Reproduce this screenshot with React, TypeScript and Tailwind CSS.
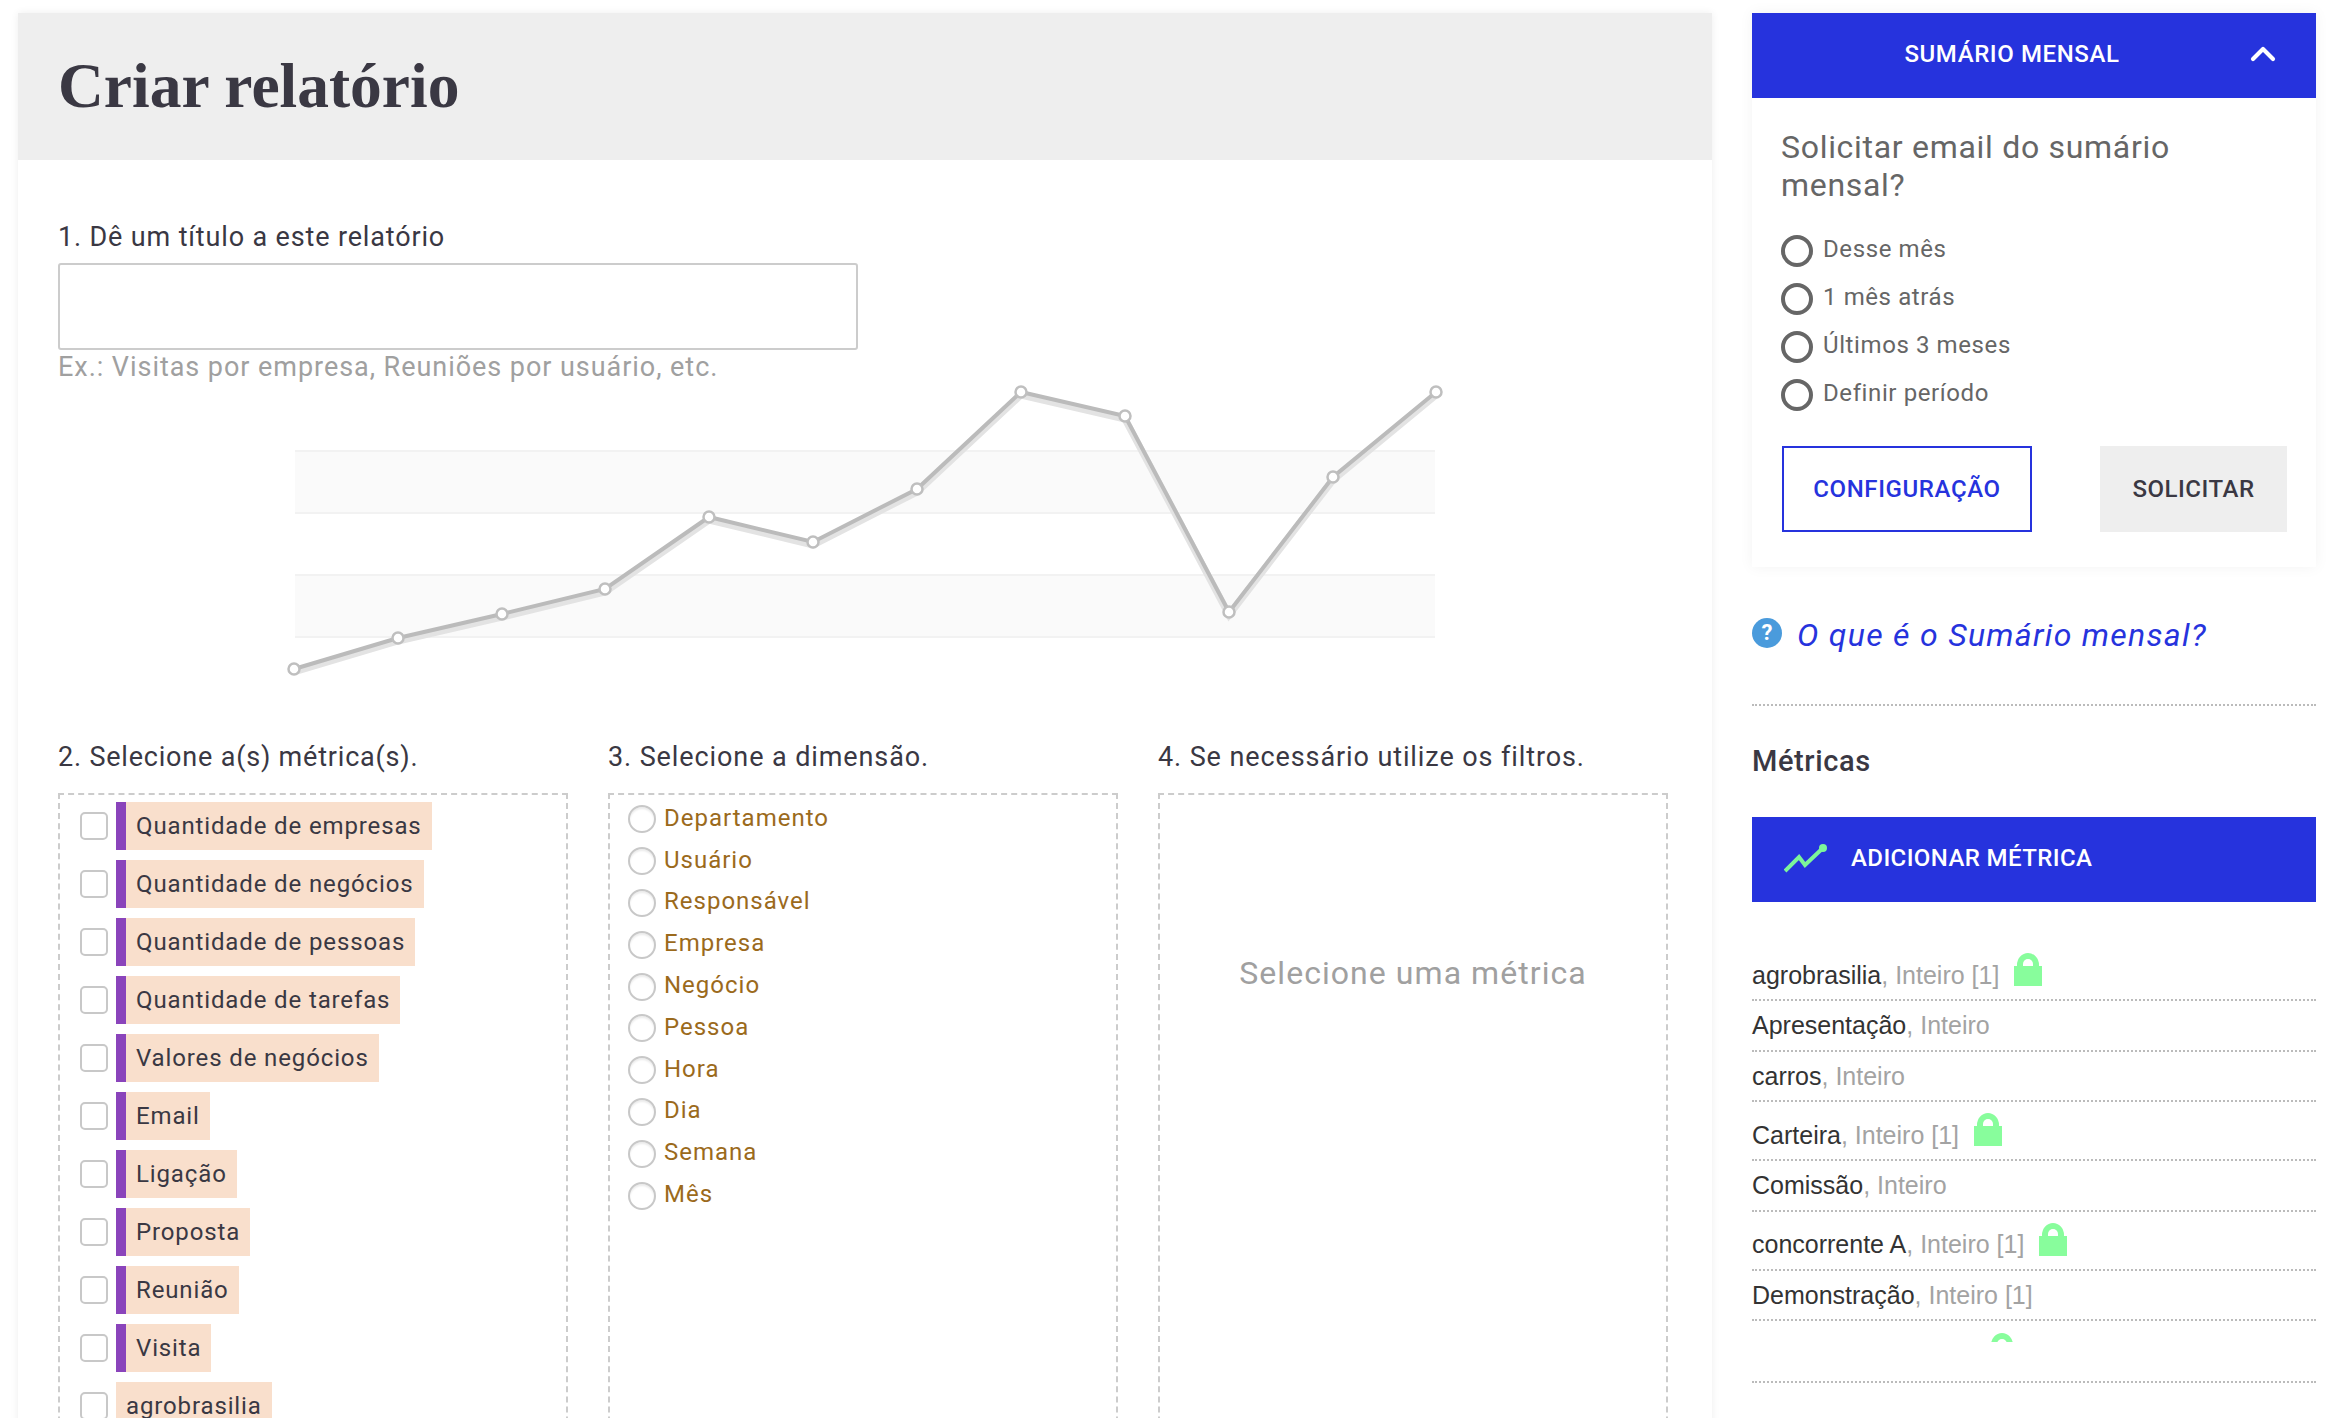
import { ChevronUp } from 'lucide-react';

const metrics = [
  { name: 'Quantidade de empresas', mark: true },
  { name: 'Quantidade de negócios', mark: true },
  { name: 'Quantidade de pessoas', mark: true },
  { name: 'Quantidade de tarefas', mark: true },
  { name: 'Valores de negócios', mark: true },
  { name: 'Email', mark: true },
  { name: 'Ligação', mark: true },
  { name: 'Proposta', mark: true },
  { name: 'Reunião', mark: true },
  { name: 'Visita', mark: true },
  { name: 'agrobrasilia', mark: false },
];

const dimensions = ['Departamento', 'Usuário', 'Responsável', 'Empresa', 'Negócio', 'Pessoa', 'Hora', 'Dia', 'Semana', 'Mês'];
const periods = ['Desse mês', '1 mês atrás', 'Últimos 3 meses', 'Definir período'];

const customMetrics = [
  { name: 'agrobrasilia', suffix: 'Inteiro [1]', lock: true },
  { name: 'Apresentação', suffix: 'Inteiro', lock: false },
  { name: 'carros', suffix: 'Inteiro', lock: false },
  { name: 'Carteira', suffix: 'Inteiro [1]', lock: true },
  { name: 'Comissão', suffix: 'Inteiro', lock: false },
  { name: 'concorrente A', suffix: 'Inteiro [1]', lock: true },
  { name: 'Demonstração', suffix: 'Inteiro [1]', lock: false },
];

const points = [
  [236, 287], [340, 256], [444, 232], [547, 207], [651, 135], [755, 160],
  [859, 107], [963, 10], [1067, 34], [1171, 230], [1275, 95], [1378, 10],
];

function Lock() {
  return (
    <svg width="28" height="33" viewBox="0 0 28 33" className="shrink-0">
      <path d="M0 13h3V12a11 12 0 0 1 22 0v1h3v20H0z" fill="#88fd9c" />
      <path d="M9 13v-2a5 5 0 0 1 10 0v2z" fill="#fff" />
    </svg>
  );
}

function Chart() {
  const line = points.map((p) => p.join(',')).join(' ');
  const shadow = points.map((p) => `${p[0]},${p[1] + 3}`).join(' ');
  return (
    <svg width="1610" height="360" viewBox="0 0 1610 360" className="block">
      <rect x="237" y="69" width="1140" height="62" fill="#fafafa" />
      <rect x="237" y="193" width="1140" height="62" fill="#fafafa" />
      {[69, 131, 193, 255].map((y) => (
        <line key={y} x1="237" x2="1377" y1={y} y2={y} stroke="#f2f2f2" strokeWidth="2" />
      ))}
      <polyline points={shadow} fill="none" stroke="#e3e3e3" strokeWidth="7" />
      <polyline points={line} fill="none" stroke="#bbbbbb" strokeWidth="4" />
      {points.map((p) => (
        <circle key={p[0]} cx={p[0]} cy={p[1]} r="5.5" fill="#fff" stroke="#bfbfbf" strokeWidth="2.5" />
      ))}
    </svg>
  );
}

export default function App() {
  return (
    <div className="flex h-[1418px] overflow-hidden bg-white pl-[18px] pt-[13px] font-['Roboto',sans-serif] text-[#3a3843]">
      <main className="flex h-[1500px] w-[1694px] shrink-0 flex-col shadow-[0_0_8px_rgba(0,0,0,0.07)]">
        <div className="flex h-[147px] items-center bg-[#eeeeee] pb-[2px] pl-[40px]">
          <h1 className="font-['Liberation_Serif',serif] text-[63.5px] font-bold">Criar relatório</h1>
        </div>
        <div className="flex flex-1 flex-col px-[40px] pt-[62px]">
          <label className="text-[27px] leading-[30px] tracking-[0.85px]">1. Dê um título a este relatório</label>
          <input className="mt-[11px] h-[87px] w-[800px] rounded-[3px] border-2 border-[#cccccc]" />
          <p className="mt-[2px] text-[27px] leading-[30px] tracking-[0.95px] text-[#a0a0a0]">Ex.: Visitas por empresa, Reuniões por usuário, etc.</p>
          <Chart />
          <div className="flex flex-1 gap-[40px]">
            <section className="flex w-[510px] flex-col">
              <h2 className="text-[27px] leading-[30px] tracking-[0.8px]">2. Selecione a(s) métrica(s).</h2>
              <div className="mt-[21px] flex-1 border-2 border-dashed border-[#cccccc] pl-[20px] pt-[7px]">
                {metrics.map((m) => (
                  <div key={m.name} className="mb-[10px] flex h-[48px] items-center gap-[8px]">
                    <span className="h-[28px] w-[28px] rounded-[5px] border-2 border-[#c8c8c8] bg-white" />
                    <span className={`flex h-full items-center bg-[#f9dfcc] px-[10px] text-[24px] tracking-[0.87px] ${m.mark ? 'border-l-[10px] border-[#8a44bb]' : ''}`}>
                      {m.name}
                    </span>
                  </div>
                ))}
              </div>
            </section>
            <section className="flex w-[510px] flex-col">
              <h2 className="text-[27px] leading-[30px] tracking-[0.9px]">3. Selecione a dimensão.</h2>
              <div className="mt-[21px] flex-1 border-2 border-dashed border-[#cccccc] pl-[18px] pt-[2px]">
                {dimensions.map((d) => (
                  <div key={d} className="flex h-[41.8px] items-center gap-[8px] text-[24px] tracking-[1px] text-[#9b6a1c]">
                    <span className="mt-[3px] h-[28px] w-[28px] rounded-full border-2 border-[#c8c8c8] shadow-[inset_0_2px_2px_rgba(0,0,0,0.08)]" />
                    {d}
                  </div>
                ))}
              </div>
            </section>
            <section className="flex w-[510px] flex-col">
              <h2 className="text-[27px] leading-[30px] tracking-[0.9px]">4. Se necessário utilize os filtros.</h2>
              <div className="mt-[21px] flex-1 border-2 border-dashed border-[#cccccc] pt-[159px] text-center text-[32px] leading-[38px] tracking-[1.05px] text-[#a0a0a0]">
                Selecione uma métrica
              </div>
            </section>
          </div>
        </div>
      </main>

      <aside className="ml-[40px] w-[564px] shrink-0">
        <div className="shadow-[0_0_14px_rgba(0,0,0,0.05)]">
          <div className="relative flex h-[85px] items-center justify-center bg-[#2633dd] pb-[4px] pr-[44px] text-[24px] font-medium tracking-[0.6px] text-white">
            SUMÁRIO MENSAL
            <ChevronUp className="absolute right-[33px] top-[21px]" size={40} strokeWidth={2.5} />
          </div>
          <div className="h-[469px] px-[29px] pt-[30px] text-[#666666]">
            <p className="w-[460px] text-[32px] leading-[38px] tracking-[0.7px]">Solicitar email do sumário mensal?</p>
            <div className="mt-[21px]">
              {periods.map((p) => (
                <div key={p} className="flex h-[48px] items-center gap-[10px] text-[24px] tracking-[0.6px]">
                  <span className="mt-[3px] h-[32px] w-[32px] rounded-full border-[4px] border-[#666666]" />
                  {p}
                </div>
              ))}
            </div>
            <div className="mt-[29px] flex justify-between">
              <button className="ml-[1px] h-[86px] w-[250px] border-2 border-[#2633dd] text-[24px] font-medium tracking-[0.6px] text-[#2633dd]">CONFIGURAÇÃO</button>
              <button className="h-[86px] w-[187px] bg-[#eeeeee] text-[24px] font-medium tracking-[0.5px] text-[#3a3843]">SOLICITAR</button>
            </div>
          </div>
        </div>

        <div className="mt-[46px] flex items-center gap-[15px] text-[32px] italic leading-[44px] tracking-[1.3px] text-[#2633dd]">
          <span className="mb-[4px] flex h-[30px] w-[30px] items-center justify-center rounded-full bg-[#4a9bdc] text-[22px] font-bold not-italic tracking-normal text-white">?</span>
          O que é o Sumário mensal?
        </div>
        <div className="mt-[47px] border-b-2 border-dotted border-[#bbbbbb]" />
        <h3 className="mt-[38px] text-[29px] font-medium leading-[34px] tracking-[0.6px]">Métricas</h3>
        <button className="mt-[39px] flex h-[85px] w-full items-center gap-[23px] bg-[#2633dd] pb-[3px] pl-[32px] text-[24px] font-medium tracking-[0.4px] text-white">
          <svg width="44" height="30" viewBox="0 0 44 30" fill="none">
            <path d="M1 28 L15 14 L21 22 L40 4" stroke="#7cf59a" strokeWidth="4" />
            <circle cx="39" cy="5" r="4" fill="#7cf59a" />
          </svg>
          ADICIONAR MÉTRICA
        </button>
        <ul className="mt-[40px] font-['Liberation_Sans',sans-serif] text-[25px] text-[#333333]">
          {customMetrics.map((m) => (
            <li key={m.name} className={`flex items-end gap-[15px] border-b-2 border-dotted border-[#bbbbbb] pb-[5px] ${m.lock ? 'h-[59px]' : 'h-[50.5px]'}`}>
              <span>
                {m.name}
                <span className="text-[#a3a3a3]">, {m.suffix}</span>
              </span>
              {m.lock && (
                <span className="mb-[8px]">
                  <Lock />
                </span>
              )}
            </li>
          ))}
          <li className="h-[62px] border-b-2 border-dotted border-[#bbbbbb] pl-[236px] pt-[12px]">
            <div className="h-[9px] overflow-hidden">
              <Lock />
            </div>
          </li>
        </ul>
      </aside>
    </div>
  );
}
